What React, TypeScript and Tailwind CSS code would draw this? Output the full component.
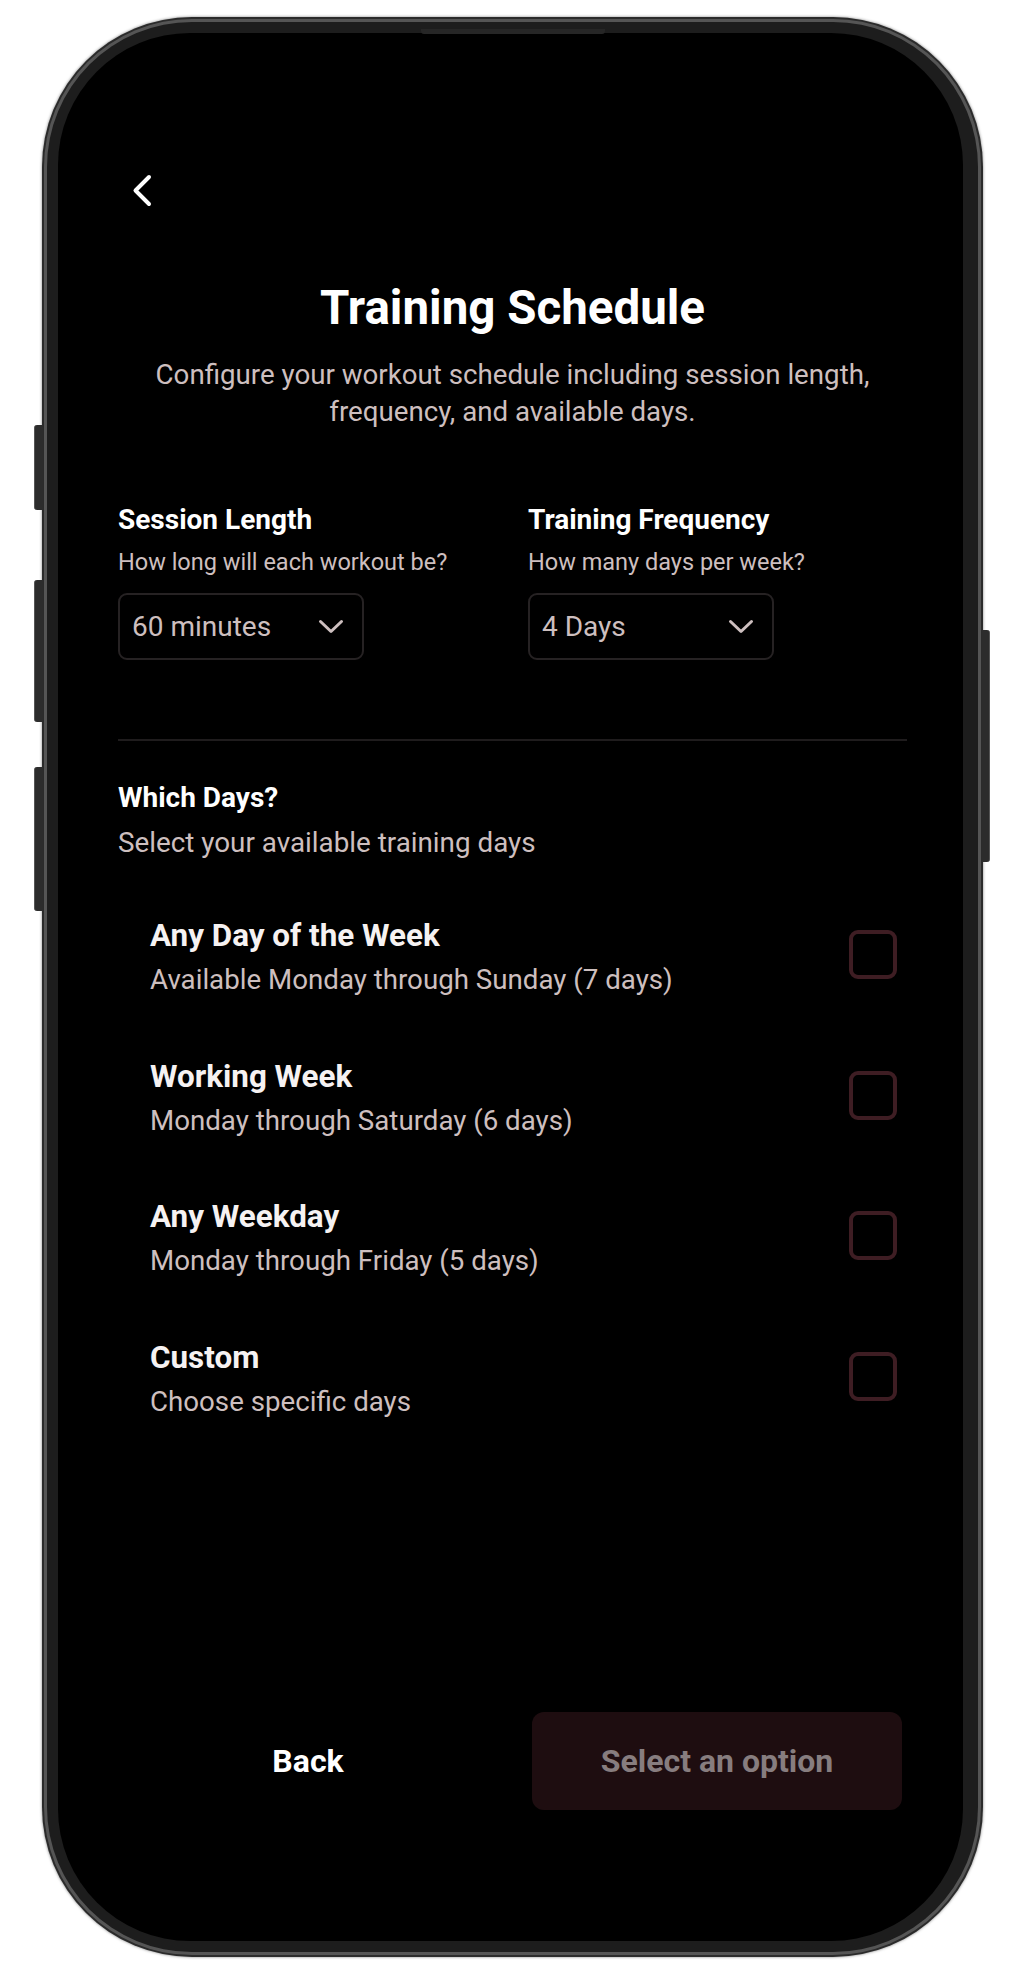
import { useState } from "react";

const options = [
  { title: "Any Day of the Week", sub: "Available Monday through Sunday (7 days)" },
  { title: "Working Week", sub: "Monday through Saturday (6 days)" },
  { title: "Any Weekday", sub: "Monday through Friday (5 days)" },
  { title: "Custom", sub: "Choose specific days" },
];

const Chevron = () => (
  <svg width="26" height="15" viewBox="0 0 26 15" fill="none">
    <path d="M2.5 2.5 L13 12.5 L23.5 2.5" stroke="#cdbfbf" strokeWidth="3" strokeLinecap="round" strokeLinejoin="round" />
  </svg>
);

const SelectBox = ({ value }: { value: string }) => (
  <div className="mt-[16px] flex h-[67px] w-[246px] items-center justify-between rounded-[9px] border-2 border-[#262223] pl-[12px] pr-[18px]">
    <span className="text-[28px] leading-[34px] text-[#cdbfbf]">{value}</span>
    <Chevron />
  </div>
);

const App = () => {
  const [checked, setChecked] = useState<number | null>(null);

  return (
    <div className="h-[1986px] w-[1024px] bg-white pl-[42px] pt-[17px] font-[Roboto,sans-serif]">
      <div className="relative h-[1940px] w-[941px] rounded-[150px] bg-[#2b2b2b] p-[2px] shadow-[0_0_3px_rgba(0,0,0,0.5)]">
        {/* side buttons */}
        <div className="absolute left-[-8px] top-[408px] h-[85px] w-[9px] rounded-l-[3px] border-l border-[#555] bg-[#2c2c2c]" />
        <div className="absolute left-[-8px] top-[563px] h-[142px] w-[9px] rounded-l-[3px] border-l border-[#555] bg-[#2c2c2c]" />
        <div className="absolute left-[-8px] top-[750px] h-[144px] w-[9px] rounded-l-[3px] border-l border-[#555] bg-[#2c2c2c]" />
        <div className="absolute right-[-7px] top-[613px] h-[232px] w-[8px] rounded-r-[3px] border-r border-[#555] bg-[#2c2c2c]" />
        <div className="absolute left-[379px] top-[12px] z-10 h-[5px] w-[184px] rounded-b-[3px] bg-[#262626]" />

        <div className="h-full w-full rounded-[148px] bg-[#555555] p-[3px]">
          <div className="h-full w-full rounded-[145px] bg-[#1d1d1d] py-[11px] pl-[11px] pr-[15px]">
            <div className="flex h-full flex-col rounded-[132px] bg-black pb-[131px] pl-[60px] pr-[56px] pt-[140px]">
              <svg className="ml-[13px]" width="22" height="35" viewBox="0 0 22 35" fill="none">
                <path d="M18 4 L4.5 17.5 L18 31" stroke="#ffffff" strokeWidth="4" strokeLinecap="round" strokeLinejoin="round" />
              </svg>

              <h1 className="mt-[72px] text-center text-[47.5px] font-bold leading-[56px] text-white">
                Training Schedule
              </h1>
              <p className="mt-[20px] text-center text-[27.7px] leading-[37px] text-[#cdbfbf]">
                Configure your workout schedule including session length, frequency, and available days.
              </p>

              <div className="mt-[73px] flex gap-[164px]">
                <div className="w-[246px]">
                  <h2 className="whitespace-nowrap text-[28px] font-bold leading-[34px] text-white">Session Length</h2>
                  <p className="mt-[10px] whitespace-nowrap text-[23.5px] leading-[30px] text-[#cdbfbf]">How long will each workout be?</p>
                  <SelectBox value="60 minutes" />
                </div>
                <div className="w-[246px]">
                  <h2 className="whitespace-nowrap text-[28px] font-bold leading-[34px] text-white">Training Frequency</h2>
                  <p className="mt-[10px] whitespace-nowrap text-[23.5px] leading-[30px] text-[#cdbfbf]">How many days per week?</p>
                  <SelectBox value="4 Days" />
                </div>
              </div>

              <div className="mt-[79px] border-t-2 border-[#1f1c1d]" />

              <h2 className="mt-[40px] text-[28px] font-bold leading-[34px] text-white">Which Days?</h2>
              <p className="mt-[11px] text-[27.8px] leading-[34px] text-[#cdbfbf]">Select your available training days</p>

              <div className="mt-[56px] flex flex-col gap-[59.5px] pl-[32px] pr-[10px]">
                {options.map((o, i) => (
                  <div key={o.title} className="flex items-start justify-between" onClick={() => setChecked(i)}>
                    <div className="pt-[2px]">
                      <div className="text-[31.4px] font-bold leading-[36px] text-[#f6f2f2]">{o.title}</div>
                      <div className="mt-[9px] text-[27.7px] leading-[34px] text-[#cdbfbf]">{o.sub}</div>
                    </div>
                    <div
                      className={`mt-[14px] h-[49px] w-[48px] rounded-[9px] border-[4px] border-[#3e1d23] ${
                        checked === i ? "bg-[#3e1d23]" : ""
                      }`}
                    />
                  </div>
                ))}
              </div>

              <div className="mt-auto flex items-center gap-[34px]">
                <button className="w-[380px] text-center text-[32px] font-bold text-white">Back</button>
                <button className="h-[98px] w-[370px] rounded-[12px] bg-[#1e0d10] text-[32px] font-bold text-[#877d7f]">
                  Select an option
                </button>
              </div>
            </div>
          </div>
        </div>
      </div>
    </div>
  );
};

export default App;
